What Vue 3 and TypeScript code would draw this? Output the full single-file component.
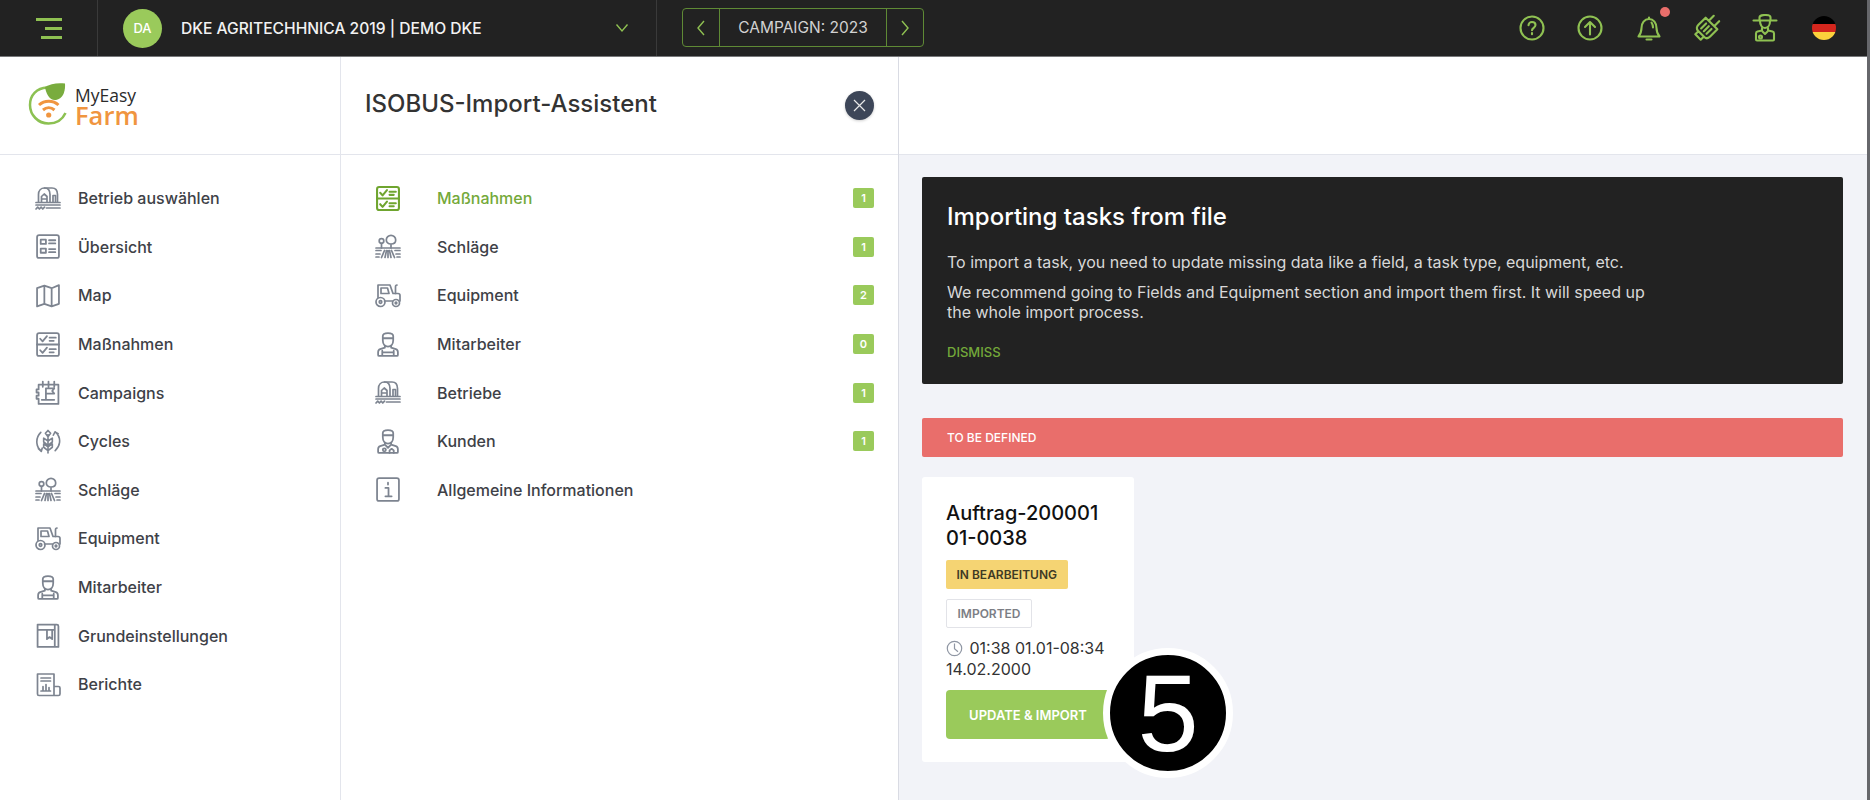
<template>
  <div class="page">
    <!-- icon sprite -->
    <svg class="sprite" aria-hidden="true">
      <symbol id="i-farm" viewBox="0 0 26 24">
        <path d="M3.500 15.500V8C3.500 4 6 1.500 9.500 1.500H17c3.500 0 5.500 2.500 5.500 6.500v7.500" />
        <path d="M9.500 1.500c3.500 0 5.500 2.500 5.500 6.500v7.500" />
        <path d="M6.500 15.500V10l2.700-2.500L12 10v5.500M6.500 12.500H12M18 15.500V9h2.500v6.500" />
        <path d="M1 16h24M1 18.500h24M11.500 21.500H25M1 22.500l1.700-1.800 1.700 1.800 1.700-1.800 1.700 1.800 1.700-1.800" />
      </symbol>
      <symbol id="i-overview" viewBox="0 0 24 24">
        <rect x="1.500" y="1" width="21" height="22" rx="2" />
        <rect x="5" y="5.500" width="5" height="4" />
        <rect x="5" y="14" width="5" height="4" />
        <path d="M13 6h6M13 9h6M13 14.500h6M13 17.500h6" />
      </symbol>
      <symbol id="i-map" viewBox="0 0 24 24">
        <path d="M1.500 5l7-2.500 7 2.500 7-3v18l-7 2.500-7-2.500-7 2.500zM8.500 2.500v17.500M15.500 5v17.500" />
      </symbol>
      <symbol id="i-tasks" viewBox="0 0 24 24">
        <rect x="1.500" y="1" width="21" height="22" rx="2" />
        <path d="M1.500 12h21M4.500 6.500l2.300 2.500 4.200-5M13.500 5.500h6M13.500 8.500h4M4.500 17.500l2.300 2.500 4.200-5M13.500 16.500h6M13.500 19.500h4" />
      </symbol>
      <symbol id="i-campaigns" viewBox="0 0 24 24">
        <path d="M3 4.500h19V23H3v-5H1v-3h2v-3H1V9h2z" />
        <path d="M7 1.500v5M12.500 1.500v5M18 1.500v5M10 19V8h8l-2 2.500 2 2.500h-8M6 19h12" />
      </symbol>
      <symbol id="i-cycles" viewBox="0 0 26 26">
        <path d="M13 25V6M13 1.500l-2.700 3 2.700 3.500 2.700-3.500zM13 12.500L8.500 9.500v4l4.500 3.500M13 12.500l4.500-3v4L13 17M13 18.500l-4.500-3V19l4.500 3.500M13 18.500l4.500-3V19L13 22.500" />
        <path d="M5.500 3.500C2 7 1 11 1.500 15c.3 3 2 6 4.500 8M3 20.500L6 23.300l1-3.500M20.500 3c3.500 3 5 7 4.500 11-.3 3-2 6-4.500 8.500M18.500 6.500L20.300 3l3.200 2" />
      </symbol>
      <symbol id="i-fields" viewBox="0 0 26 24">
        <circle cx="6.500" cy="6.500" r="2.300" />
        <path d="M6.500 8.800V13.500M16 13.500V9.500M16 9.500c-2.800 0-4.700-1.500-4.700-4C11.300 3 13.500.800 16 .800s4.700 2.200 4.700 4.700c0 2.500-1.900 4-4.700 4z" />
        <path d="M1 13.500h24M1 16h5M1 19.500h4M1 22.500h3M20 16h5M21 19.500h4M22 22.500h3M9.500 16l-3 7M13 16v7M11.500 16L10 23M14.500 16l1.500 7M16.500 16l3 7" />
      </symbol>
      <symbol id="i-tractor" viewBox="0 0 26 24">
        <path d="M3 14V1.500h12l3 8.500h5c1.200 0 2 .8 2 2v5.500M9.500 17.500h8" />
        <path d="M6 4.500h6.500l1.500 5.500H6zM20.500 10V3.500c0-1 .5-2 1.500-2" />
        <circle cx="5.500" cy="18.500" r="4.500" />
        <circle cx="5.500" cy="18.500" r="1.300" />
        <circle cx="21" cy="19.500" r="3.500" />
        <circle cx="21" cy="19.500" r=".8" />
      </symbol>
      <symbol id="i-worker" viewBox="0 0 24 24">
        <path d="M7 8V3.800C7 2 9 1 12 1s5 1 5 2.800V8M7 6h10M7 8c0 3.500 2 6 5 6s5-2.500 5-6" />
        <path d="M9 13.500v1.500l-4.500 1.500C3 17 2.500 18 2.500 19.500V22c0 .7.500 1 1 1h17c.5 0 1-.3 1-1v-2.500c0-1.500-.5-2.500-2-3L15 15v-1.500M6.500 23v-5M17.500 23v-5M6.500 19.500h11" />
      </symbol>
      <symbol id="i-client" viewBox="0 0 24 24">
        <path d="M7 8V3.800C7 2 9 1 12 1s5 1 5 2.800V8M7 6h10M7 8c0 3.500 2 6 5 6s5-2.500 5-6" />
        <path d="M9 13.500v1.500l-4.500 1.500C3 17 2.500 18 2.500 19.500V22c0 .7.500 1 1 1h17c.5 0 1-.3 1-1v-2.500c0-1.500-.5-2.500-2-3L15 15v-1.500M9.500 15.500l2.500 2.500 2.500-2.500" />
        <circle cx="8.500" cy="20" r="1.500" />
        <path d="M13.500 23v-2.500l2-1.500 2 1.500V23" />
      </symbol>
      <symbol id="i-settings" viewBox="0 0 24 24">
        <path d="M2 1.500h18.500c.8 0 1.500.7 1.500 1.500v20H2zM2 6.500h16.500M18.500 1.500V23M11 6.500v9l2.500-2 2.500 2v-9" />
      </symbol>
      <symbol id="i-reports" viewBox="0 0 26 24">
        <path d="M2.500 1.500H19V23H4c-1 0-1.500-.5-1.500-1.500zM19 14h4.500c.8 0 1.500.7 1.500 1.500v6c0 1-.7 1.500-1.500 1.500H19" />
        <path d="M6 5.500h9.500M6 8.500h9.500M6 18.500h9.500M8 18v-4M11 18v-6M14 18v-3" />
      </symbol>
      <symbol id="i-info" viewBox="0 0 24 24">
        <rect x="1.500" y="1" width="21" height="22" rx="2" />
        <path d="M9.500 10.500H12.500V18.500M9.500 18.500h6M12 5.500v1.800" />
      </symbol>
    </svg>

    <header class="topbar">
      <div class="burger-cell">
        <span class="burger"><i></i><i></i><i></i></span>
      </div>
      <div class="account-cell">
        <span class="avatar">DA</span>
        <span class="account-name">DKE AGRITECHHNICA 2019 | DEMO DKE</span>
        <svg class="account-chevron" width="14" height="10" viewBox="0 0 14 10"><path d="M1.500 1.500L7 8l5.500-6.500" /></svg>
      </div>
      <div class="campaign">
        <button class="camp-arrow">
          <svg width="10" height="18" viewBox="0 0 10 18"><path d="M8 2L2 9l6 7" /></svg>
        </button>
        <span class="camp-label">CAMPAIGN: 2023</span>
        <button class="camp-arrow">
          <svg width="10" height="18" viewBox="0 0 10 18"><path d="M2 2l6 7-6 7" /></svg>
        </button>
      </div>
      <div class="top-icons">
        <span class="top-icon">
          <svg width="26" height="26" viewBox="0 0 26 26">
            <circle cx="13" cy="13" r="11.500" />
            <path d="M9.500 10.300c0-2 1.500-3.300 3.500-3.300s3.500 1.300 3.500 3.100c0 2.700-3.500 2.700-3.500 5.200M13 18v1.200" />
          </svg>
        </span>
        <span class="top-icon">
          <svg width="26" height="26" viewBox="0 0 26 26">
            <circle cx="13" cy="13" r="11.500" />
            <path d="M13 19.500V7M8 12l5-5 5 5" />
          </svg>
        </span>
        <span class="top-icon bell">
          <svg width="26" height="26" viewBox="0 0 26 26">
            <path d="M2.500 21.500c2-2.500 3-4 3-8.500 0-5 3-9 7.500-9s7.500 4 7.500 9c0 4.500 1 6 3 8.500zM10.500 24.500h5M13 4V2.500" />
            <path d="M15.500 7.500c1 1.500 1.500 3 1.500 5" />
          </svg>
          <span class="dot"></span>
        </span>
        <span class="top-icon">
          <svg class="plug" width="28" height="28" viewBox="2 2 22 22">
            <g transform="rotate(45 13 13)">
              <path d="M6.500 8h13v8c0 2-1 3.500-3 3.500h-7c-2 0-3-1.500-3-3.500zM10 8V2.500M16 8V2.500M10 19.500v3.500h6v-3.500M10 11v5.500M13 11v5.500M16 11v5.500" />
            </g>
          </svg>
        </span>
        <span class="top-icon">
          <svg width="26" height="28" viewBox="0 0 26 28">
            <path d="M1.500 6.500h23M7.500 6.500V3.500C7.500 2 10 1 13 1s5.500 1 5.500 2.500v3M8 7c0 4 2 7 5 7s5-3 5-7" />
            <path d="M10 14v2.500l-4.500 1c-1 .3-1.500 1-1.500 2v6c0 .7.300 1 1 1h16c.7 0 1-.3 1-1v-6c0-1-.5-1.700-1.500-2L16 16.500V14M10.500 17.500l2.500 2.500 2.500-2.500" />
            <circle cx="8.500" cy="23" r="1.500" />
          </svg>
        </span>
        <span class="top-icon"><span class="flag"></span></span>
      </div>
    </header>

    <div class="body">
      <aside class="sidebar">
        <div class="logo-row">
          <svg class="logo-mark" width="42" height="44" viewBox="0 0 42 44">
            <path class="logo-ring" d="M19 4.500C9 5 2 12 2 22c0 10 8 18.500 18.500 18.500 8 0 14-4 17-10.500" />
            <path class="logo-leaf" d="M17 4c5-3 12-4.500 20-3.500 .5 8-2 15-9 16.500C22 18 18 11 17 4z" />
            <path class="logo-wifi" d="M11 22c5.500-5 14-5 19.500 0M15 27c3.500-3 8-3 11.500 0" />
            <circle class="logo-dot" cx="20.700" cy="32" r="2.600" />
          </svg>
          <div class="logo-text">
            <span class="logo-top">MyEasy</span>
            <span class="logo-bottom">Farm</span>
          </div>
        </div>
        <nav class="side-nav">
          <a v-for="item in sideItems" :key="item.label" class="side-link">
            <svg class="nav-icon"><use :href="'#i-' + item.icon" /></svg>
            <span>{{ item.label }}</span>
          </a>
        </nav>
      </aside>

      <section class="wizard">
        <div class="wizard-head">
          <h1>ISOBUS-Import-Assistent</h1>
          <button class="close-btn">
            <svg width="13" height="13" viewBox="0 0 13 13"><path d="M1 1l11 11M12 1L1 12" /></svg>
          </button>
        </div>
        <nav class="wizard-nav">
          <a v-for="(step, i) in wizardSteps" :key="step.label" class="wizard-link" :class="{ active: i === 0 }">
            <svg class="nav-icon"><use :href="'#i-' + step.icon" /></svg>
            <span class="wizard-label">{{ step.label }}</span>
            <span v-if="step.count !== undefined" class="count">{{ step.count }}</span>
          </a>
        </nav>
      </section>

      <main class="main">
        <div class="main-head"></div>
        <div class="main-content">
          <div class="notice">
            <h2>Importing tasks from file</h2>
            <p>To import a task, you need to update missing data like a field, a task type, equipment, etc.</p>
            <p>We recommend going to Fields and Equipment section and import them first. It will speed up the whole import process.</p>
            <a class="dismiss">DISMISS</a>
          </div>
          <div class="group-bar">TO BE DEFINED</div>
          <div class="task-card">
            <h3>Auftrag-20000101-0038</h3>
            <span class="tag tag-yellow">IN BEARBEITUNG</span>
            <span class="tag tag-outline">IMPORTED</span>
            <p class="task-time">
              <svg width="17" height="17" viewBox="0 0 17 17"><circle cx="8.500" cy="8.500" r="7.200" /><path d="M8.500 3.500v5.200l3.500 3" /></svg>
              01:38 01.01-08:34 14.02.2000
            </p>
            <button class="import-btn">UPDATE &amp; IMPORT</button>
            <span class="step-number">5</span>
          </div>
        </div>
      </main>
    </div>
  </div>
</template>

<script setup lang="ts">
interface NavItem {
  label: string;
  icon: string;
  count?: number;
}

const sideItems: NavItem[] = [
  { label: "Betrieb auswählen", icon: "farm" },
  { label: "Übersicht", icon: "overview" },
  { label: "Map", icon: "map" },
  { label: "Maßnahmen", icon: "tasks" },
  { label: "Campaigns", icon: "campaigns" },
  { label: "Cycles", icon: "cycles" },
  { label: "Schläge", icon: "fields" },
  { label: "Equipment", icon: "tractor" },
  { label: "Mitarbeiter", icon: "worker" },
  { label: "Grundeinstellungen", icon: "settings" },
  { label: "Berichte", icon: "reports" },
];

const wizardSteps: NavItem[] = [
  { label: "Maßnahmen", icon: "tasks", count: 1 },
  { label: "Schläge", icon: "fields", count: 1 },
  { label: "Equipment", icon: "tractor", count: 2 },
  { label: "Mitarbeiter", icon: "worker", count: 0 },
  { label: "Betriebe", icon: "farm", count: 1 },
  { label: "Kunden", icon: "client", count: 1 },
  { label: "Allgemeine Informationen", icon: "info" },
];
</script>

<style scoped>
.page {
  height: 100vh;
  display: flex;
  flex-direction: column;
  box-sizing: border-box;
  border-right: 3px solid #66676b;
  overflow: hidden;
  font-family: Inter, "Noto Sans", sans-serif;
  color: #3e4147;
  background: #fff;
}

.sprite {
  position: absolute;
  width: 0;
  height: 0;
}

/* top bar */
.topbar {
  height: 57px;
  flex: none;
  box-sizing: border-box;
  display: flex;
  align-items: stretch;
  background: #222;
  border-bottom: 1px solid #77787a;
}

.burger-cell {
  width: 98px;
  box-sizing: border-box;
  border-right: 1px solid #3a3a3a;
  display: flex;
  align-items: center;
  padding-left: 36px;
}

.burger {
  width: 26px;
  display: flex;
  flex-direction: column;
  align-items: flex-end;
  gap: 6px;
}

.burger i {
  display: block;
  height: 3px;
  background: #8fc152;
}

.burger i:nth-child(1) {
  width: 26px;
}

.burger i:nth-child(2) {
  width: 17px;
}

.burger i:nth-child(3) {
  width: 21px;
}

.account-cell {
  width: 559px;
  box-sizing: border-box;
  border-right: 1px solid #3a3a3a;
  display: flex;
  align-items: center;
  padding: 0 27px 0 25px;
}

.avatar {
  width: 39px;
  height: 39px;
  border-radius: 50%;
  background: #9aca5b;
  color: #fff;
  font-size: 13px;
  font-weight: 500;
  display: flex;
  align-items: center;
  justify-content: center;
}

.account-name {
  margin-left: 19px;
  color: #f2f2f2;
  font-size: 15.600px;
  font-weight: 500;
}

.account-chevron {
  margin-left: auto;
  fill: none;
  stroke: #8fc152;
  stroke-width: 1.400;
}

.campaign {
  margin: 8px 0 0 25px;
  width: 242px;
  height: 39px;
  box-sizing: border-box;
  display: flex;
  border: 1px solid #5f8a35;
  border-radius: 4px;
}

.camp-arrow {
  width: 36px;
  padding: 0;
  border: none;
  background: none;
  display: flex;
  align-items: center;
  justify-content: center;
}

.camp-arrow svg {
  fill: none;
  stroke: #8fc152;
  stroke-width: 1.400;
}

.camp-label {
  flex: 1;
  border-left: 1px solid #5f8a35;
  border-right: 1px solid #5f8a35;
  color: #d2d2d2;
  font-size: 15.500px;
  display: flex;
  align-items: center;
  justify-content: center;
}

.top-icons {
  margin-left: auto;
  padding-right: 14px;
  display: flex;
  align-items: center;
}

.top-icon {
  position: relative;
  width: 58.400px;
  display: flex;
  justify-content: center;
  align-items: center;
}

.top-icon svg {
  fill: none;
  stroke: #8fc152;
  stroke-width: 2.100;
  stroke-linecap: round;
  stroke-linejoin: round;
}

.top-icon svg.plug {
  stroke-width: 1.700;
}

.dot {
  position: absolute;
  top: -8px;
  left: 41px;
  width: 10px;
  height: 10px;
  border-radius: 50%;
  background: #e96e6b;
}

.flag {
  width: 24px;
  height: 24px;
  border-radius: 50%;
  background: linear-gradient(#000 0 33.300%, #d4261d 33.300% 66.600%, #fcd13c 66.600%);
}

/* columns */
.body {
  flex: 1;
  display: flex;
  min-height: 0;
}

.sidebar {
  width: 341px;
  flex: none;
  box-sizing: border-box;
  border-right: 1px solid #e3e5ec;
}

.logo-row {
  height: 98px;
  box-sizing: border-box;
  border-bottom: 1px solid #e3e5ec;
  display: flex;
  align-items: center;
  padding: 0 0 2px 28px;
  gap: 5px;
}

.logo-ring {
  fill: none;
  stroke: #8cc152;
  stroke-width: 2.500;
}

.logo-leaf {
  fill: #79ac3e;
}

.logo-wifi {
  fill: none;
  stroke: #f0953f;
  stroke-width: 3;
}

.logo-dot {
  fill: #f0953f;
}

.logo-text {
  display: flex;
  flex-direction: column;
  font-family: "Open Sans", "Noto Sans", sans-serif;
}

.logo-top {
  font-size: 17.500px;
  line-height: 20px;
  color: #2b2b2b;
}

.logo-bottom {
  font-size: 25.500px;
  line-height: 20px;
  font-weight: 600;
  color: #f0953f;
}

.side-nav {
  padding-top: 19px;
}

.side-link {
  height: 48.600px;
  display: flex;
  align-items: center;
  padding-left: 35px;
  font-size: 16px;
  font-weight: 500;
}

.side-link .nav-icon {
  margin-right: 17px;
}

.nav-icon {
  width: 26px;
  height: 25px;
  flex: none;
  fill: none;
  stroke: #7d8490;
  stroke-width: 1.700;
  stroke-linejoin: round;
  stroke-linecap: round;
}

/* wizard column */
.wizard {
  width: 558px;
  flex: none;
  box-sizing: border-box;
  border-right: 1px solid #d9dbe3;
}

.wizard-head {
  height: 98px;
  box-sizing: border-box;
  border-bottom: 1px solid #e3e5ec;
  display: flex;
  align-items: center;
  justify-content: space-between;
  padding: 0 24px 0 24px;
}

.wizard-head h1 {
  margin: 0 0 4px;
  font-size: 24px;
  font-weight: 500;
  color: #333;
}

.close-btn {
  width: 29px;
  height: 29px;
  padding: 0;
  border: none;
  border-radius: 50%;
  background: #3d4658;
  box-shadow: 0 1px 3px rgba(0, 0, 0, 0.2);
  display: flex;
  align-items: center;
  justify-content: center;
}

.close-btn svg {
  fill: none;
  stroke: #e8e8e8;
  stroke-width: 1.200;
}

.wizard-nav {
  padding-top: 19px;
}

.wizard-link {
  height: 48.600px;
  display: flex;
  align-items: center;
  padding: 0 24px 0 34px;
  font-size: 16px;
  font-weight: 500;
}

.wizard-label {
  margin-left: 36px;
}

.wizard-link.active {
  color: #74a93a;
}

.wizard-link.active .nav-icon {
  stroke: #6fa52f;
  stroke-width: 2;
}

.count {
  margin-left: auto;
  width: 21px;
  height: 20px;
  border-radius: 2px;
  background: #9aca5b;
  color: #fff;
  font-size: 11px;
  font-weight: 600;
  display: flex;
  align-items: center;
  justify-content: center;
}

/* right column */
.main {
  flex: 1;
  min-width: 0;
  display: flex;
  flex-direction: column;
  background: #f2f3f8;
}

.main-head {
  height: 98px;
  flex: none;
  box-sizing: border-box;
  background: #fff;
  border-bottom: 1px solid #e3e5ec;
}

.main-content {
  padding: 22px 24px 0 23px;
}

.notice {
  height: 207px;
  box-sizing: border-box;
  padding: 25px 25px;
  background: #222;
  border-radius: 2px;
  color: #d8d8d8;
}

.notice h2 {
  margin: 0 0 20px;
  color: #fff;
  font-size: 24px;
  line-height: 30px;
  font-weight: 500;
}

.notice p {
  max-width: 725px;
  margin: 0 0 10px;
  font-size: 16px;
  line-height: 20px;
}

.dismiss {
  display: block;
  margin-top: 22px;
  color: #74a93a;
  font-size: 13px;
  font-weight: 500;
}

.group-bar {
  height: 39px;
  margin-top: 34px;
  padding-left: 25px;
  display: flex;
  align-items: center;
  border-radius: 2px;
  background: #e96e6b;
  color: #fff;
  font-size: 12px;
  font-weight: 500;
}

.task-card {
  position: relative;
  width: 212px;
  height: 285px;
  box-sizing: border-box;
  margin-top: 20px;
  padding: 24px;
  border-radius: 3px;
  background: #fff;
}

.task-card h3 {
  margin: 0 0 9px;
  color: #111;
  font-size: 20px;
  line-height: 25px;
  font-weight: 500;
  word-break: break-all;
}

.tag {
  display: block;
  width: fit-content;
  height: 29px;
  box-sizing: border-box;
  padding: 0 10.500px;
  border-radius: 2px;
  font-size: 12px;
  line-height: 29px;
  font-weight: 600;
}

.tag-yellow {
  background: #f5d473;
  color: #3f3a24;
}

.tag-outline {
  margin-top: 10px;
  border: 1px solid #e2e3e8;
  line-height: 27px;
  color: #7c7e85;
}

.task-time {
  margin: 10px 0 10px;
  color: #333;
  font-size: 16px;
  line-height: 21px;
}

.task-time svg {
  vertical-align: -3px;
  margin-right: 2px;
  fill: none;
  stroke: #8f96a3;
  stroke-width: 1.200;
}

.import-btn {
  width: 164px;
  height: 49px;
  padding: 0;
  border: none;
  border-radius: 4px;
  background: #9aca5b;
  color: #fff;
  font-family: inherit;
  font-size: 13px;
  font-weight: 600;
  white-space: nowrap;
}

.step-number {
  position: absolute;
  left: 181px;
  top: 171px;
  width: 130px;
  height: 130px;
  box-sizing: border-box;
  border: 7px solid #fff;
  border-radius: 50%;
  background: #000;
  color: #fff;
  font-family: "Liberation Sans", Arial, sans-serif;
  font-size: 110px;
  line-height: 116px;
  text-align: center;
}
</style>
